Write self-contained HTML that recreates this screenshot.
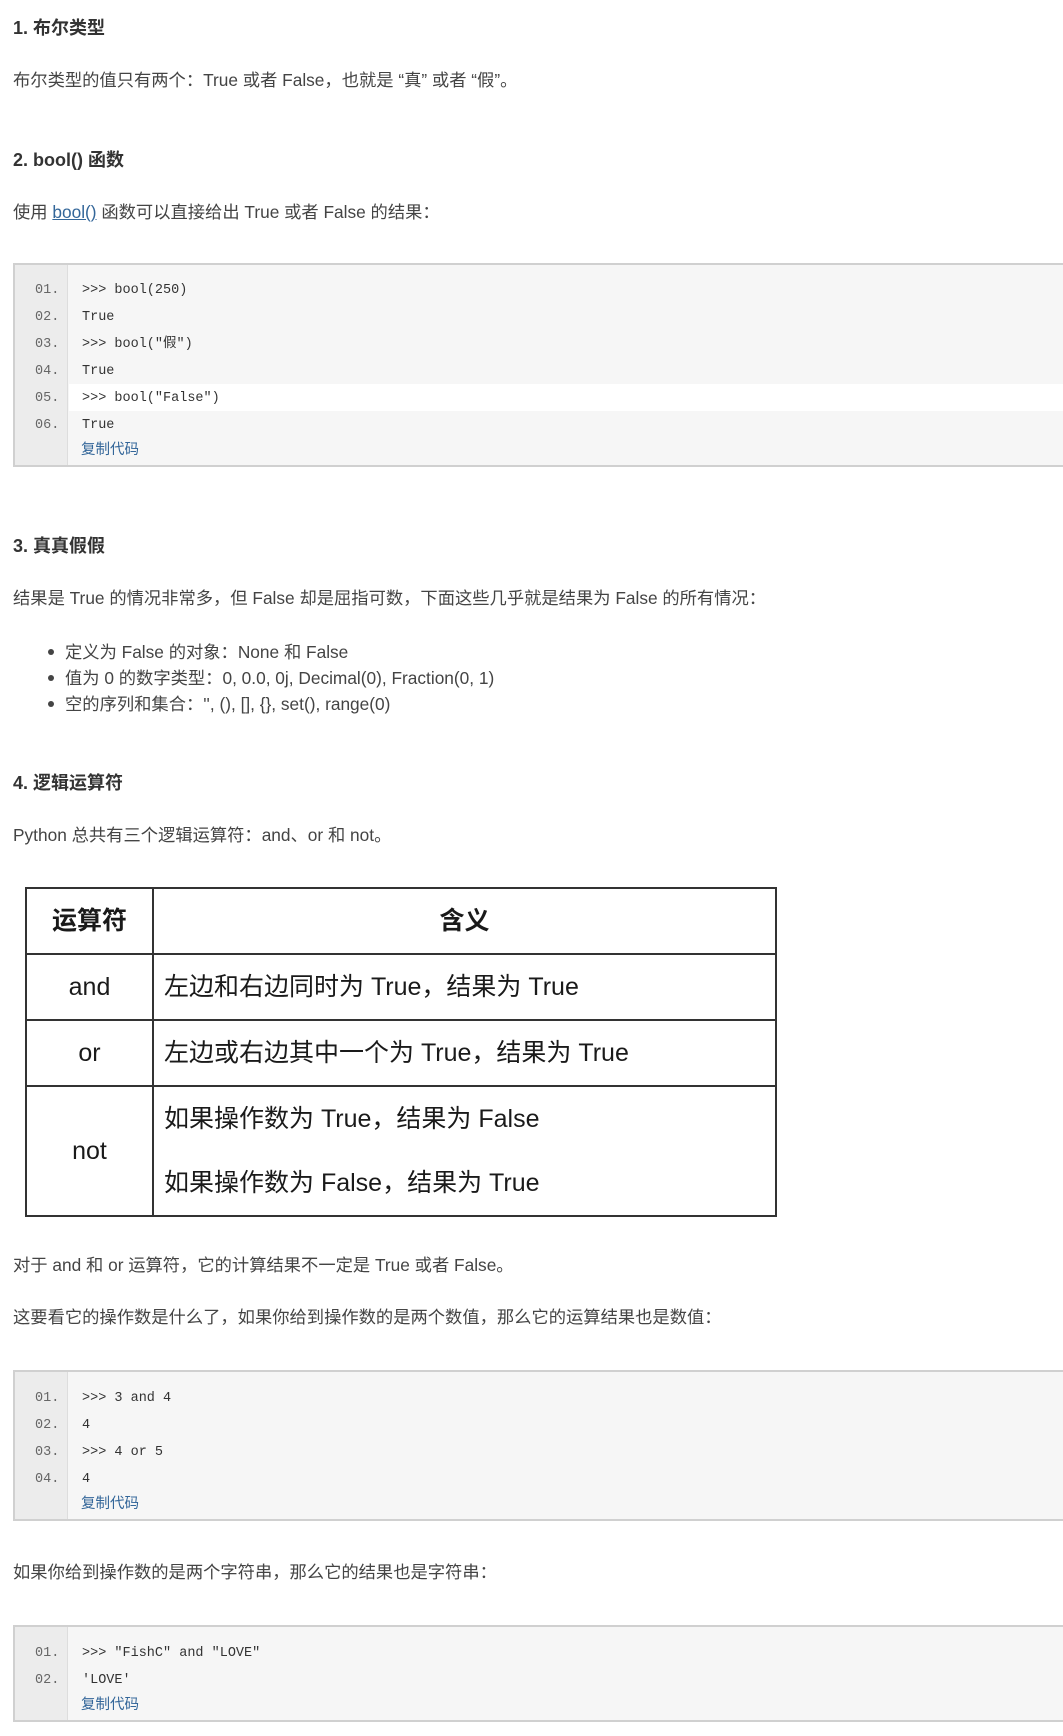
<!DOCTYPE html>
<html><head><meta charset="utf-8">
<style>
*{margin:0;padding:0;box-sizing:border-box}
html,body{width:1063px;height:1736px;background:#fff;overflow:hidden}
body{position:relative;font-family:"Liberation Sans","Noto Sans CJK SC",sans-serif;color:#444;font-size:17.3px}
.t{position:absolute;left:13px;height:26px;line-height:26px;white-space:nowrap}
.h{font-weight:bold;font-size:18px;color:#333}
a{color:#336699;text-decoration:underline}
.code{position:absolute;left:13px;width:1060px;background:#f6f6f6;border:2px solid #d0d0d0;border-right:none}
.gut{position:absolute;left:0;top:0;bottom:0;width:53px;background:#ececec;border-right:1px solid #ddd}
.ln{position:absolute;height:27px;line-height:27px;font-family:"Liberation Mono","Noto Sans CJK SC",monospace;font-size:13.5px;white-space:nowrap}
.num{left:20px;color:#666}
.cd{left:67px;color:#333}
.hl{position:absolute;left:54px;right:0;height:27px;background:#fff}
.cp{position:absolute;left:66px;font-size:14.5px;color:#336699;height:20px;line-height:20px}
table{position:absolute;left:25px;top:887px;width:752px;border-collapse:collapse;color:#1a1a1a;font-size:25px}
td{border:2px solid #333;height:66px;line-height:30px}
.c1{width:127px;text-align:center}
.c2{padding-left:10px}
ul li{position:absolute;left:65px;height:26px;line-height:26px;list-style:none;white-space:nowrap}
ul li:before{content:"";position:absolute;left:-17px;top:10px;width:6px;height:6px;border-radius:50%;background:#444}
</style></head><body>
<div class="t h" style="top:15px">1. 布尔类型</div>
<div class="t" style="top:67px">布尔类型的值只有两个：True 或者 False，也就是 “真” 或者 “假”。</div>
<div class="t h" style="top:147px">2. bool() 函数</div>
<div class="t" style="top:199px">使用 <a>bool()</a> 函数可以直接给出 True 或者 False 的结果：</div>

<div class="code" style="top:263px;height:204px">
<div class="gut"></div>
<div class="hl" style="top:119px"></div>
<div class="ln num" style="top:12px">01.</div><div class="ln cd" style="top:12px">&gt;&gt;&gt; bool(250)</div>
<div class="ln num" style="top:39px">02.</div><div class="ln cd" style="top:39px">True</div>
<div class="ln num" style="top:66px">03.</div><div class="ln cd" style="top:66px">&gt;&gt;&gt; bool("假")</div>
<div class="ln num" style="top:93px">04.</div><div class="ln cd" style="top:93px">True</div>
<div class="ln num" style="top:120px">05.</div><div class="ln cd" style="top:120px">&gt;&gt;&gt; bool("False")</div>
<div class="ln num" style="top:147px">06.</div><div class="ln cd" style="top:147px">True</div>
<div class="cp" style="top:175px">复制代码</div>
</div>

<div class="t h" style="top:533px">3. 真真假假</div>
<div class="t" style="top:585px">结果是 True 的情况非常多，但 False 却是屈指可数，下面这些几乎就是结果为 False 的所有情况：</div>
<ul>
<li style="top:639px">定义为 False 的对象：None 和 False</li>
<li style="top:665px">值为 0 的数字类型：0, 0.0, 0j, Decimal(0), Fraction(0, 1)</li>
<li style="top:691px">空的序列和集合：'', (), [], {}, set(), range(0)</li>
</ul>
<div class="t h" style="top:770px">4. 逻辑运算符</div>
<div class="t" style="top:822px">Python 总共有三个逻辑运算符：and、or 和 not。</div>

<table>
<tr><td class="c1" style="font-weight:bold;height:66px">运算符</td><td style="text-align:center;font-weight:bold">含义</td></tr>
<tr><td class="c1">and</td><td class="c2">左边和右边同时为 True，结果为 True</td></tr>
<tr><td class="c1">or</td><td class="c2">左边或右边其中一个为 True，结果为 True</td></tr>
<tr><td class="c1" style="height:130px">not</td><td class="c2" style="line-height:64px">如果操作数为 True，结果为 False<br>如果操作数为 False，结果为 True</td></tr>
</table>

<div class="t" style="top:1252px">对于 and 和 or 运算符，它的计算结果不一定是 True 或者 False。</div>
<div class="t" style="top:1304px">这要看它的操作数是什么了，如果你给到操作数的是两个数值，那么它的运算结果也是数值：</div>

<div class="code" style="top:1370px;height:151px">
<div class="gut"></div>
<div class="ln num" style="top:13px">01.</div><div class="ln cd" style="top:13px">&gt;&gt;&gt; 3 and 4</div>
<div class="ln num" style="top:40px">02.</div><div class="ln cd" style="top:40px">4</div>
<div class="ln num" style="top:67px">03.</div><div class="ln cd" style="top:67px">&gt;&gt;&gt; 4 or 5</div>
<div class="ln num" style="top:94px">04.</div><div class="ln cd" style="top:94px">4</div>
<div class="cp" style="top:122px">复制代码</div>
</div>

<div class="t" style="top:1559px">如果你给到操作数的是两个字符串，那么它的结果也是字符串：</div>

<div class="code" style="top:1625px;height:97px">
<div class="gut"></div>
<div class="ln num" style="top:13px">01.</div><div class="ln cd" style="top:13px">&gt;&gt;&gt; "FishC" and "LOVE"</div>
<div class="ln num" style="top:40px">02.</div><div class="ln cd" style="top:40px">'LOVE'</div>
<div class="cp" style="top:68px">复制代码</div>
</div>
</body></html>
